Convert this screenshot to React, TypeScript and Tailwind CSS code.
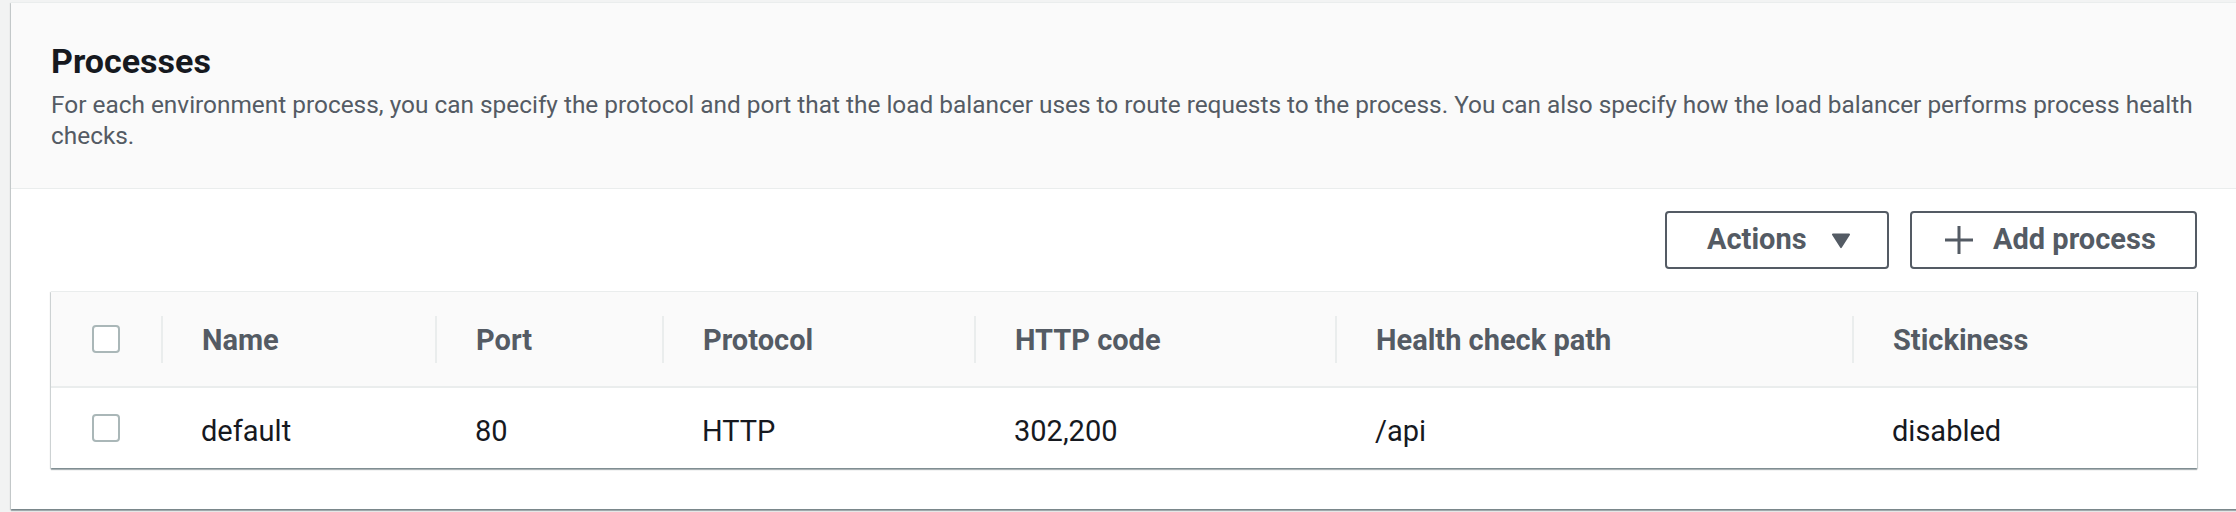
const columns = [
  { key: "name", label: "Name", width: "w-[274px]" },
  { key: "port", label: "Port", width: "w-[227px]" },
  { key: "protocol", label: "Protocol", width: "w-[312px]" },
  { key: "code", label: "HTTP code", width: "w-[361px]" },
  { key: "path", label: "Health check path", width: "w-[517px]" },
  { key: "stickiness", label: "Stickiness", width: "w-[344px]" },
];

const processes = [
  {
    name: "default",
    port: "80",
    protocol: "HTTP",
    code: "302,200",
    path: "/api",
    stickiness: "disabled",
  },
];

function Checkbox() {
  return (
    <span className="block h-[28px] w-[28px] rounded-[4px] border-2 border-[#aab7b8] bg-white" />
  );
}

function PlusIcon() {
  return (
    <svg width="30" height="30" viewBox="0 0 30 30" aria-hidden="true">
      <path d="M15 1v28M1 15h28" stroke="#545b64" strokeWidth="3" fill="none" />
    </svg>
  );
}

function CaretIcon() {
  return (
    <svg width="20" height="17" viewBox="0 0 20 17" aria-hidden="true">
      <path
        d="M2 1.5h16a1 1 0 0 1 .85 1.5l-8 12.5a1 1 0 0 1-1.7 0l-8-12.5A1 1 0 0 1 2 1.5z"
        fill="#545b64"
      />
    </svg>
  );
}

export default function App() {
  return (
    <div
      className="h-[512px] w-full overflow-hidden bg-[#f2f3f3] pt-[2px]"
      style={{ fontFamily: "Roboto, 'Liberation Sans', sans-serif" }}
    >
      <div className="ml-[11px] flex h-[507px] w-[2226px] flex-col border-t border-[#eaeded] bg-white shadow-[0_2px_1px_0_rgba(0,28,36,0.3),1px_1px_1px_0_rgba(0,28,36,0.15),-1px_1px_1px_0_rgba(0,28,36,0.15)]">
        <div className="border-b border-[#eaeded] bg-[#fafafa] px-[40px] pb-[37px] pt-[38px]">
          <h2 className="text-[34px] font-bold leading-[40px] text-[#16191f]">Processes</h2>
          <p className="mt-[8px] text-[24.4px] leading-[31px] text-[#545b64]">
            For each environment process, you can specify the protocol and port that the load
            balancer uses to route requests to the process. You can also specify how the load
            balancer performs process health
            <br />
            checks.
          </p>
        </div>

        <div className="px-[40px] pt-[22px]">
          <div className="flex justify-end gap-[21px]">
            <button
              type="button"
              className="flex h-[58px] w-[224px] items-center rounded-[4px] border-2 border-[#545b64] bg-white pl-[40px] text-[29px] font-bold text-[#545b64]"
            >
              Actions
              <span className="ml-[24px] flex items-center">
                <CaretIcon />
              </span>
            </button>
            <button
              type="button"
              className="flex h-[58px] w-[287px] items-center gap-[19px] rounded-[4px] border-2 border-[#545b64] bg-white pl-[32px] text-[29px] font-bold text-[#545b64]"
            >
              <PlusIcon />
              Add process
            </button>
          </div>

          <div className="mt-[22px] border-t border-[#eaeded] bg-white shadow-[0_2px_1px_0_rgba(0,28,36,0.3),1px_1px_1px_0_rgba(0,28,36,0.15),-1px_1px_1px_0_rgba(0,28,36,0.15)]">
            <div className="flex h-[96px] items-center border-b-2 border-[#eaeded] bg-[#fafafa]">
              <div className="flex w-[110px] items-center pl-[41px]">
                <Checkbox />
              </div>
              {columns.map((col) => (
                <div key={col.key} className={col.width}>
                  <div className="flex h-[47px] items-center border-l-2 border-[#eaeded] pl-[39px] pt-[3px] text-[29px] font-bold text-[#545b64]">
                    {col.label}
                  </div>
                </div>
              ))}
            </div>

            {processes.map((p) => (
              <div key={p.name} className="flex h-[80px] items-center text-[29px] text-[#16191f]">
                <div className="flex w-[110px] items-center pl-[41px]">
                  <Checkbox />
                </div>
                <div className="w-[274px] pl-[40px] pt-[8px]">{p.name}</div>
                <div className="w-[227px] pl-[40px] pt-[8px]">{p.port}</div>
                <div className="w-[312px] pl-[40px] pt-[8px]">{p.protocol}</div>
                <div className="w-[361px] pl-[40px] pt-[8px]">{p.code}</div>
                <div className="w-[517px] pl-[40px] pt-[8px]">{p.path}</div>
                <div className="w-[344px] pl-[40px] pt-[8px]">{p.stickiness}</div>
              </div>
            ))}
          </div>
        </div>
      </div>
    </div>
  );
}
